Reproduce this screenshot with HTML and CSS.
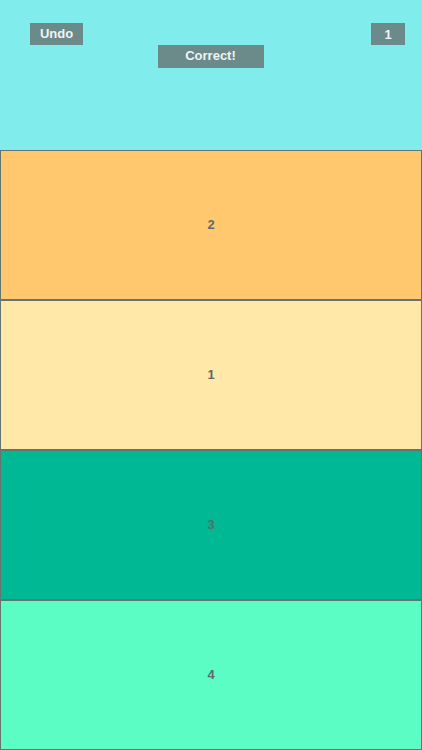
FILE: index.html
```html
<!DOCTYPE html>
<html>
<head>
<meta charset="utf-8">
<link rel="stylesheet" href="styles.css">
</head>
<body>
<div class="screen">
  <header class="top">
    <div class="row">
      <div class="btn undo">Undo</div>
      <div class="btn count">1</div>
    </div>
    <div class="status">
      <div class="btn correct">Correct!</div>
    </div>
  </header>
  <div class="band orange">2</div>
  <div class="band cream">1</div>
  <div class="band teal">3</div>
  <div class="band mint">4</div>
</div>
</body>
</html>
```
FILE: styles.css
```css
html, body {
  margin: 0;
  padding: 0;
}
body {
  font-family: "Liberation Sans", Arial, sans-serif;
  width: 422px;
  height: 750px;
  overflow: hidden;
}
.screen {
  display: flex;
  flex-direction: column;
  width: 422px;
  height: 750px;
}
.top {
  height: 150px;
  background: #80ecec;
  box-sizing: border-box;
  padding: 23px 17px 0 30px;
  display: flex;
  flex-direction: column;
}
.row {
  display: flex;
  justify-content: space-between;
}
.btn {
  background: #6b8a8a;
  color: #eef3f3;
  font-weight: bold;
  font-size: 13px;
  height: 22px;
  box-sizing: border-box;
  padding-bottom: 2px;
  display: flex;
  align-items: center;
  justify-content: center;
}
.undo {
  width: 53px;
}
.count {
  width: 34px;
  padding-bottom: 0;
}
.status {
  display: flex;
  justify-content: center;
  margin-left: -30px;
  margin-right: -17px;
  padding-right: 1px;
}
.correct {
  width: 106px;
  height: 23px;
}
.band {
  height: 150px;
  box-sizing: border-box;
  border: 1px solid #64746f;
  display: flex;
  align-items: center;
  justify-content: center;
  font-weight: bold;
  font-size: 13px;
  color: #5d6b6b;
  padding-bottom: 1px;
}
.orange { background: #ffc86e; }
.cream { background: #ffe8a8; }
.teal { background: #00b894; }
.mint { background: #5cfdc4; }
```
